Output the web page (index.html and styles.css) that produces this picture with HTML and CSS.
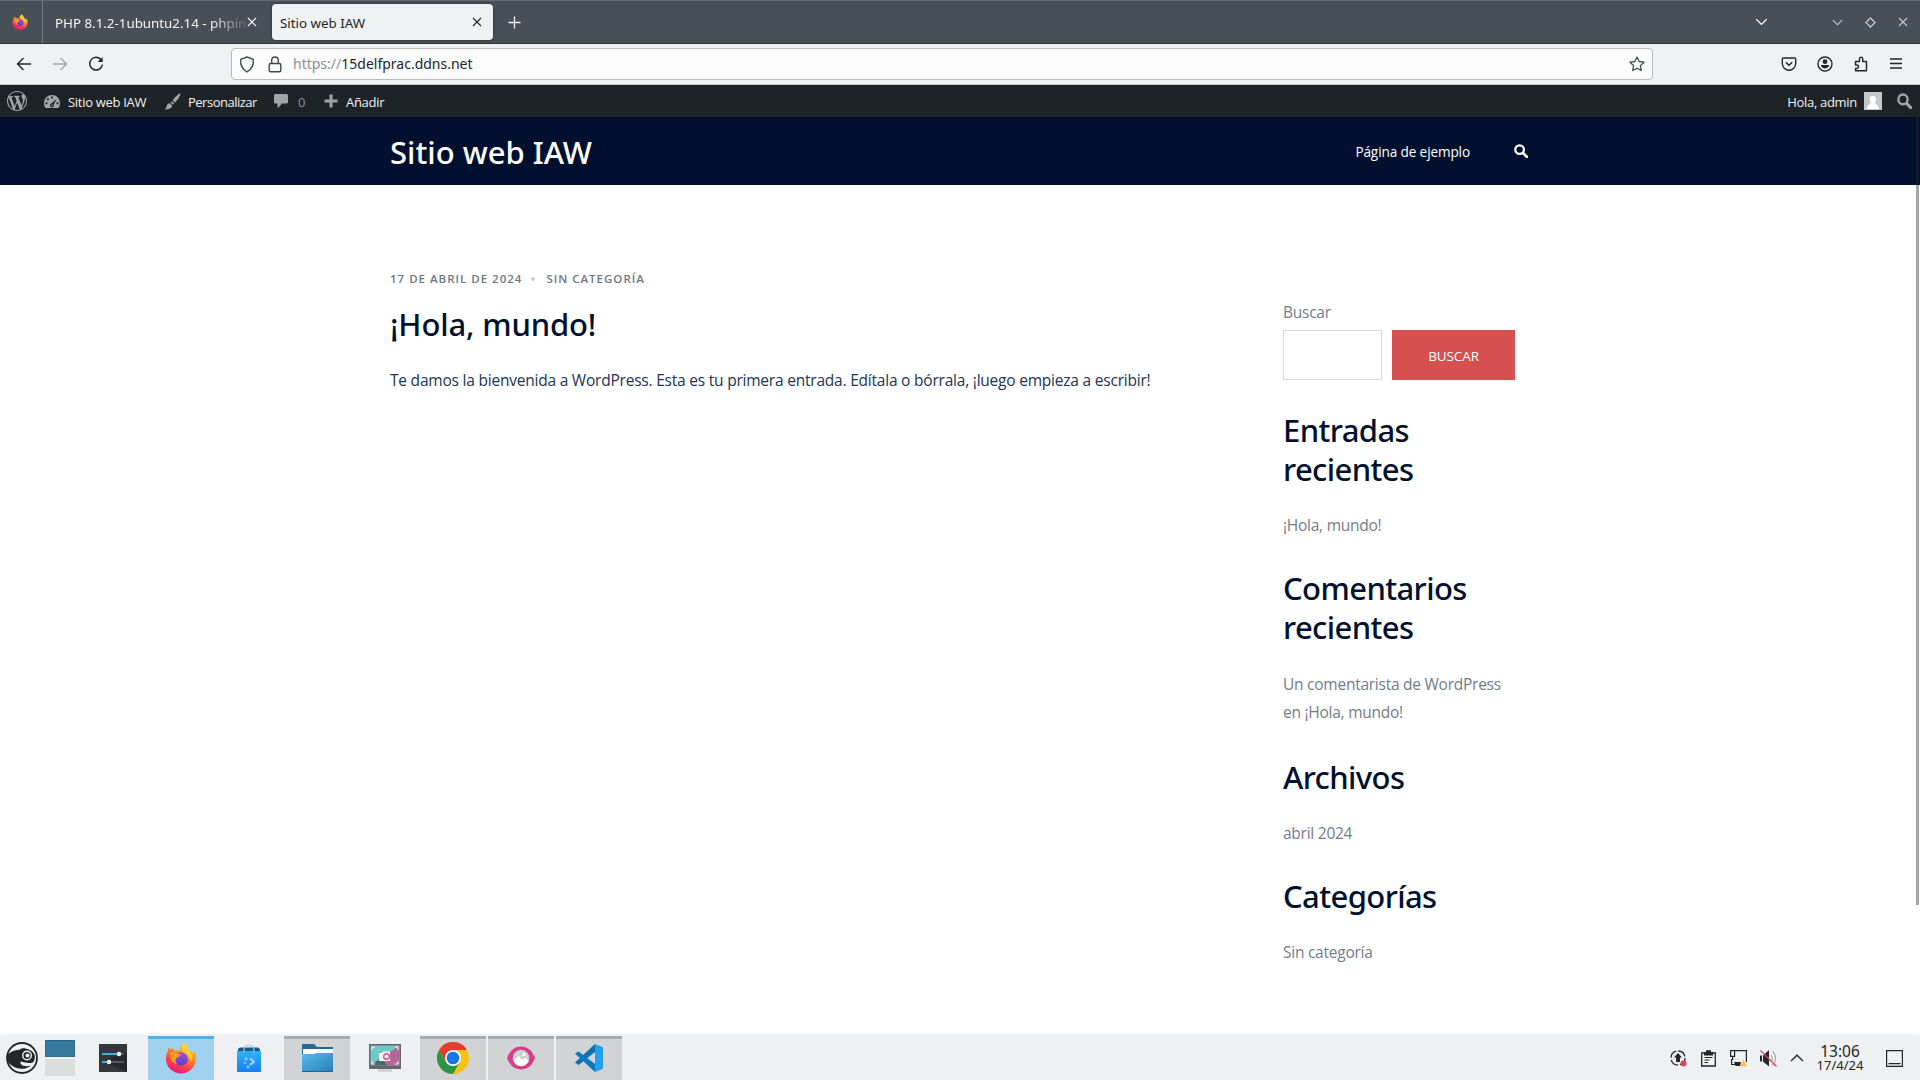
FILE: index.html
```html
<!DOCTYPE html>
<html lang="es">
<head>
<meta charset="utf-8">
<title>Sitio web IAW</title>
<link rel="stylesheet" href="styles.css">
</head>
<body>
<svg class="defs" width="0" height="0">
  <defs>
    <linearGradient id="fire" x1=".8" y1="0" x2=".3" y2="1"><stop offset="0" stop-color="#ffe226"/><stop offset=".4" stop-color="#ff8a1e"/><stop offset=".75" stop-color="#ff3750"/><stop offset="1" stop-color="#e8177c"/></linearGradient>
    <linearGradient id="globe" x1="0" y1="0" x2="0" y2="1"><stop offset="0" stop-color="#a34de0"/><stop offset="1" stop-color="#5b3fc4"/></linearGradient>
    <linearGradient id="bag" x1="0" y1="0" x2="0" y2="1"><stop offset="0" stop-color="#2fb3f5"/><stop offset="1" stop-color="#1a7df5"/></linearGradient>
    <linearGradient id="fold" x1="0" y1="0" x2="1" y2="1"><stop offset="0" stop-color="#57bbea"/><stop offset="1" stop-color="#2980b9"/></linearGradient>
    <symbol id="firefox" viewBox="0 0 32 32">
      <path fill="url(#fire)" d="M19 1c3 2 4 4 4.500 6.500 1.500.3 3.500 2 4.500 4 .8-.7.6-2 .3-3C31 11 31.500 14 31 18c-1 8-7.500 13.500-15 13.500S2 26 1 18.500C.6 15 1.500 11.500 3 9l.5-3.500L6 8c0-1 .4-2 1-2.500L9.500 9c2-.6 3.500-.6 5 0C14.500 5.500 16.500 2.500 19 1z"/>
      <circle cx="16" cy="17" r="6.800" fill="url(#globe)"/>
      <path fill="#ff9a20" d="M5 11c2.500-1.500 6-1.500 8 .5l3 1.500c-.5 1.800-3.500 1.800-5 3.500-1 2-.4 4 1 5.500-4-.5-7-4-7-11z"/>
      <path fill="#ffd83a" d="M19 1c3 2 4 4 4.500 6.500C27 11 28 16 26 20c-1-5-3.500-8-7-9.500-3.500-2-2.500-6.500 0-9.500z" opacity=".8"/>
    </symbol>
    <symbol id="cross" viewBox="0 0 10 10"><path d="M1 1l8 8M9 1L1 9" fill="none" stroke="currentColor" stroke-width="1.100"/></symbol>
    <symbol id="down" viewBox="0 0 12 8"><path d="M.8 1.200L6 6.400l5.200-5.200" fill="none" stroke="currentColor" stroke-width="1.300"/></symbol>
    <symbol id="lens" viewBox="0 0 14 14"><circle cx="5.600" cy="5.600" r="4.300" fill="none" stroke="currentColor" stroke-width="2.200"/><path d="M9 9l3.800 3.800" stroke="currentColor" stroke-width="2.700" stroke-linecap="round"/></symbol>
  </defs>
</svg>

<header class="tabs">
  <div class="pinned"><svg width="16" height="16"><use href="#firefox"/></svg></div>
  <div class="tab"><span class="tab-title fade">PHP 8.1.2-1ubuntu2.14 - phpin</span><svg class="x" width="10" height="10"><use href="#cross"/></svg></div>
  <div class="tab active"><span class="tab-title">Sitio web IAW</span><svg class="x" width="10" height="10"><use href="#cross"/></svg></div>
  <svg class="new-tab" width="13" height="13" viewBox="0 0 13 13"><path d="M6.500.5v12M.5 6.500h12" stroke="#f4f5f6" stroke-width="1.300"/></svg>
  <div class="window-controls">
    <svg class="all-tabs" width="13" height="8"><use href="#down"/></svg>
    <svg width="11" height="7"><use href="#down"/></svg>
    <svg width="11" height="11" viewBox="0 0 11 11"><path d="M5.500 1L10 5.500 5.500 10 1 5.500z" fill="none" stroke="currentColor" stroke-width="1.300"/></svg>
    <svg width="10" height="10"><use href="#cross"/></svg>
  </div>
</header>

<nav class="toolbar">
  <div class="nav-buttons">
    <svg width="16" height="14" viewBox="0 0 16 14"><path d="M7.500 1L1.500 7l6 6M1.500 7H15" fill="none" stroke="#232629" stroke-width="1.400"/></svg>
    <svg width="16" height="14" viewBox="0 0 16 14"><path d="M8.500 1l6 6-6 6M14.500 7H1" fill="none" stroke="#a4a6a9" stroke-width="1.400"/></svg>
    <svg width="16" height="16" viewBox="0 0 16 16"><path d="M13.300 4A6.400 6.400 0 1 0 14.400 8.500" fill="none" stroke="#232629" stroke-width="1.500"/><path d="M14.700 1v5h-5z" fill="#232629"/></svg>
  </div>
  <div class="url">
    <svg width="16" height="17" viewBox="0 0 16 17"><path d="M8 1l6.300 2.300C14.800 9 12.500 13.500 8 16 3.500 13.500 1.200 9 1.700 3.300z" fill="none" stroke="#45494d" stroke-width="1.400" stroke-linejoin="round"/></svg>
    <svg width="14" height="17" viewBox="0 0 14 17"><rect x="1.200" y="7.500" width="11.600" height="8.300" rx="1.500" fill="none" stroke="#45494d" stroke-width="1.400"/><path d="M3.700 7.500V4.300a3.300 3.300 0 0 1 6.600 0v3.200" fill="none" stroke="#45494d" stroke-width="1.400"/></svg>
    <span class="address"><span class="scheme">https://</span>15delfprac.ddns.net</span>
    <svg width="16" height="16" viewBox="0 0 16 16"><path d="M8 1l2.100 4.500 4.900.7-3.600 3.400.9 4.900L8 12.200l-4.300 2.300.9-4.900L1 6.200l4.900-.7z" fill="none" stroke="#45494d" stroke-width="1.300" stroke-linejoin="round"/></svg>
  </div>
  <div class="tools">
    <svg width="16" height="16" viewBox="0 0 16 16"><path d="M2.500 2h11a1.200 1.200 0 0 1 1.200 1.200V7.500a6.700 6.700 0 0 1-13.400 0V3.200A1.200 1.200 0 0 1 2.500 2zM4.800 6.200L8 9.300l3.200-3.100" fill="none" stroke="currentColor" stroke-width="1.400"/></svg>
    <svg width="16" height="16" viewBox="0 0 16 16"><circle cx="8" cy="8" r="7" fill="none" stroke="currentColor" stroke-width="1.400"/><circle cx="8" cy="5.700" r="2.400" fill="currentColor"/><path d="M3.800 9h8.400c-.3 2.200-2 3.500-4.200 3.500S4.100 11.200 3.800 9z" fill="currentColor"/></svg>
    <svg width="16" height="16" viewBox="0 0 16 16"><path d="M2.500 9V5.500h4V2.700a1.600 1.600 0 0 1 3.200 0v2.800h3.800v9.300h-11v-2.300h1.300a1.700 1.700 0 0 0 0-3.500z" fill="none" stroke="currentColor" stroke-width="1.400" stroke-linejoin="round"/></svg>
    <svg width="14" height="16" viewBox="0 0 14 16"><path d="M1 3h12M1 7.500h12M1 12h12" stroke="currentColor" stroke-width="1.300"/></svg>
  </div>
</nav>

<div class="adminbar">
  <svg class="wp" width="20" height="20" viewBox="0 0 20 20"><path fill="currentColor" d="M20 10c0-5.510-4.490-10-10-10C4.480 0 0 4.490 0 10c0 5.520 4.480 10 10 10 5.510 0 10-4.480 10-10zM7.780 15.370L4.370 6.220c.55-.02 1.170-.08 1.170-.08.5-.06.44-1.130-.06-1.110 0 0-1.450.11-2.370.11-.18 0-.37 0-.58-.01C4.120 2.690 6.870 1.110 10 1.110c2.330 0 4.450.87 6.050 2.340-.68-.11-1.650.39-1.650 1.580 0 .74.45 1.360.9 2.100.35.610.55 1.360.55 2.460 0 1.490-1.400 5-1.400 5l-3.030-8.370c.54-.02.82-.17.82-.17.5-.05.44-1.250-.06-1.220 0 0-1.440.12-2.380.12-.87 0-2.330-.12-2.330-.12-.5-.03-.56 1.200-.06 1.220l.92.08 1.260 3.410zM17.410 10c.24-.64.740-1.870.43-4.250.7 1.290 1.050 2.710 1.050 4.250 0 3.290-1.730 6.240-4.400 7.780.97-2.590 1.940-5.200 2.920-7.780zM6.100 18.090C3.120 16.650 1.110 13.530 1.110 10c0-1.300.23-2.480.72-3.590C3.250 10.300 4.670 14.200 6.100 18.090zm4.030-6.630l2.580 6.980c-.86.29-1.760.45-2.710.45-.79 0-1.570-.11-2.290-.33.81-2.380 1.620-4.740 2.420-7.100z"/></svg>
  <div class="ab-item site">
    <svg width="16" height="15" viewBox="0 0 16 15"><path d="M8 1a8 8 0 0 0-8 8c0 2 .6 3.700 1.500 5h13A8.500 8.500 0 0 0 16 9a8 8 0 0 0-8-8z" fill="currentColor"/><g fill="#1d2327"><circle cx="8" cy="3.600" r="1.100"/><circle cx="3.900" cy="5.300" r="1.100"/><circle cx="2.500" cy="9.300" r="1.100"/><circle cx="13.500" cy="9.300" r="1.100"/><path d="M12.800 4.800L9.700 10.500a2 2 0 1 1-2.400-1z"/></g><circle cx="8" cy="11.200" r=".8" fill="currentColor"/></svg>
    <span>Sitio web IAW</span></div>
  <div class="ab-item customize">
    <svg width="17" height="17" viewBox="0 0 17 17"><path d="M16.300.7c.7.800-.3 3-5.300 9L8.600 7.500C13 2 15.500-.1 16.300.7zM7.800 8.300l2.300 2.300-1.200 1.200-2.300-2.300zM5.800 10.200l2.300 2.400c.2 2.200-3 4.300-7.800 3.800 2-1 1.800-2.200 2.500-4 .6-1.500 1.900-2.200 3-2.200z" fill="currentColor"/></svg>
    <span>Personalizar</span></div>
  <div class="ab-item comments">
    <svg width="14" height="16" viewBox="0 0 14 16"><path d="M1.500 1h11A1.500 1.500 0 0 1 14 2.500V9a1.500 1.500 0 0 1-1.500 1.500H8L3.500 15.500v-5h-2A1.500 1.500 0 0 1 0 9V2.500A1.500 1.500 0 0 1 1.500 1z" fill="currentColor"/></svg>
    <span class="dim">0</span></div>
  <div class="ab-item add">
    <svg width="14" height="14" viewBox="0 0 14 14"><path d="M7 .5v13M.5 7h13" stroke="currentColor" stroke-width="3"/></svg>
    <span>Añadir</span></div>
  <div class="ab-item account"><span>Hola, admin</span>
    <svg width="18" height="18" viewBox="0 0 18 18"><path d="M0 0h18v18H0z" fill="#c5c6c7"/><path d="M9 4a3.200 3.200 0 0 1 3.200 3.400c0 1.500-.6 2.400-1.300 3.200.2 1.700 3.600 2 4.100 6.400H3c.5-4.400 3.900-4.700 4.100-6.400-.7-.8-1.300-1.700-1.300-3.200A3.200 3.200 0 0 1 9 4z" fill="#fff"/></svg>
    <svg class="ab-search" width="15" height="16" viewBox="0 0 14 14" preserveAspectRatio="none"><use href="#lens"/></svg></div>
</div>

<div class="site-header">
  <div class="container">
    <div class="brand">Sitio web IAW</div>
    <div class="menu"><span>Página de ejemplo</span><svg width="14" height="14"><use href="#lens"/></svg></div>
  </div>
</div>

<main class="content container">
  <article>
    <div class="meta"><span>17 de abril de 2024</span><i></i><span>Sin categoría</span></div>
    <h2>¡Hola, mundo!</h2>
    <p>Te damos la bienvenida a WordPress. Esta es tu primera entrada. Edítala o bórrala, ¡luego empieza a escribir!</p>
  </article>
  <aside>
    <label>Buscar</label>
    <div class="search"><div class="field"></div><div class="button">BUSCAR</div></div>
    <h2>Entradas<br>recientes</h2>
    <p>¡Hola, mundo!</p>
    <h2>Comentarios<br>recientes</h2>
    <p class="comment">Un comentarista de WordPress<br>en ¡Hola, mundo!</p>
    <h2>Archivos</h2>
    <p>abril 2024</p>
    <h2>Categorías</h2>
    <p>Sin categoría</p>
  </aside>
</main>
<div class="scrollbar"></div>

<footer class="taskbar">
  <svg class="start" width="32" height="32" viewBox="0 0 32 32"><circle cx="16" cy="16" r="15" fill="#eff0f1" stroke="#232629" stroke-width="1.800"/><path d="M1.500 13C4 9.500 9 8 13 8c2-1.500 4-2 6.500-1.500 4 .5 7.500 2.500 9 6 .7 3 .3 6-1.500 8-4 1-8 .5-12-1-1.500 1 0 3.500 2.500 4.300 2.500.7 5 .5 7.500-.3-3 2.700-6.500 3.500-10 3.300C10 26.500 6 24.500 1.800 20z" fill="#232629"/><circle cx="21" cy="13.500" r="4.300" fill="#232629" stroke="#eff0f1" stroke-width="1.400"/><circle cx="21.500" cy="13.500" r="2" fill="#eff0f1"/></svg>
  <div class="pager"><b></b><b></b></div>
  <div class="task"><svg width="28" height="28" viewBox="0 0 28 28"><path d="M0 0h28v28H0z" fill="#34373b"/><path d="M4 18l24 10V8L20 10z" fill="#26292c"/><path d="M3 10h22M3 18h22" stroke="#54585c" stroke-width="2"/><path d="M3 10h17M3 18h7" stroke="#3daee9" stroke-width="2"/><circle cx="20" cy="10" r="2.200" fill="#fff"/><circle cx="10" cy="18" r="2.200" fill="#fff"/></svg></div>
  <div class="task focused"><svg width="32" height="32"><use href="#firefox"/></svg></div>
  <div class="task"><svg width="24" height="28" viewBox="0 0 24 28"><path d="M1 5l2-1.500h18L23 5v4H1z" fill="#22587c"/><path d="M0 7h24v21H0z" fill="url(#bag)"/><path d="M7 9V6a5 5 0 0 1 10 0v3" fill="none" stroke="#7fcbf5" stroke-width="1.200"/><path d="M13 14.500l4 3.200-4 3.300" fill="none" stroke="#a9d9ff" stroke-width="1.800"/><circle cx="9" cy="15" r="1.400" fill="#8dd0ff"/><circle cx="8" cy="19" r="1" fill="#8dd0ff"/><circle cx="11" cy="23" r="1.400" fill="#8dd0ff"/></svg></div>
  <div class="task open"><svg width="31" height="28" viewBox="0 0 31 28"><path d="M0 0h12l3 3h16v12H0z" fill="#28688f"/><path d="M1 5h30v8H1z" fill="#fff"/><path d="M0 10h12l2-1h17v19H0z" fill="url(#fold)"/><path d="M0 27h31v1H0z" fill="#216695"/></svg></div>
  <div class="task"><svg width="32" height="28" viewBox="0 0 32 28"><path d="M0 0h32v25H0z" fill="#656769"/><path d="M1.500 1.500h29v20h-29z" fill="#6fc9c8"/><path d="M30.500 1.500v20H17l-5-7z" fill="#b0689b"/><path d="M1.500 21.500L12 14l6 7.500z" fill="#4e6a68"/><path d="M3 6V3h3M26 3h3v3M29 17v3h-3M6 20H3v-3" fill="none" stroke="#fff"/><path d="M10 9h3l1-1.500h7V17H10z" fill="#f3f0f2"/><circle cx="17.500" cy="12.500" r="2.800" fill="none" stroke="#d4568b" stroke-width="1.400"/><path d="M9 26.500h14" stroke="#c5c7c9" stroke-width="2"/></svg></div>
  <div class="task open"><svg width="32" height="32" viewBox="0 0 32 32"><circle cx="16" cy="16" r="16" fill="#fbc116"/><path d="M16 8h13.860A16 16 0 0 0 2.140 8l6.930 12z" fill="#e33b2e"/><path d="M2.140 8a16 16 0 0 0 13.860 24l6.930-12L16 24l-6.930-4z" fill="#2a9547"/><circle cx="16" cy="16" r="8" fill="#fff"/><circle cx="16" cy="16" r="6.300" fill="#1a73e8"/></svg></div>
  <div class="task open"><svg width="28" height="24" viewBox="0 0 28 24"><path d="M0 12C3 4 8 .5 14 .5S25 4 28 12c-3 8-8 11.500-14 11.500S3 20 0 12z" fill="#d83d8b"/><circle cx="14" cy="12" r="8.300" fill="#cfd0d2"/><path d="M6.500 15l5-5 4 4 3-2 3.300 3a8.300 8.300 0 0 1-15.300 0z" fill="#fff"/><circle cx="17" cy="8.500" r="1.500" fill="#fff"/></svg></div>
  <div class="task open"><svg width="28" height="28" viewBox="0 0 28 28"><path d="M20 0v8L3.500 21 0 18.500 20 0z" fill="#0b70b5"/><path d="M20 28v-8L3.500 7.500 0 9.500 20 28z" fill="#0879c0"/><path d="M20 0l8 3.300v21.400L20 28z" fill="#24a0ee"/></svg></div>
  <div class="tray">
    <svg width="17" height="17" viewBox="0 0 17 17"><circle cx="8" cy="8" r="7" fill="none" stroke="#232629" stroke-width="1.300" stroke-dasharray="9 2"/><path d="M8 3l4 4.500H10V12H6V7.500H4z" fill="#232629"/><circle cx="13.500" cy="13.500" r="3" fill="#da4453"/></svg>
    <svg width="17" height="17" viewBox="-1 0 17 17"><path d="M.7 3h13.600v13H.7z" fill="none" stroke="#232629" stroke-width="1.300"/><path d="M3 2h2V.3h5V2h2v3.500H3z" fill="#232629"/><path d="M3.500 7.500h8M3.500 10h5M3.500 12.500h3.500" stroke="#232629"/></svg>
    <svg width="17" height="17" viewBox="0 0 17 17"><path d="M.6.6h4v5.800h-4zM4.600.6h11.800V12M2.600 6.500v3h-1v5H5" fill="none" stroke="#232629" stroke-width="1.200"/><path d="M4 12h7l-1 4H5.500z" fill="#232629"/><path d="M13.500 10l3.500 6.500h-7z" fill="#fdbc4b"/></svg>
    <svg width="17" height="17" viewBox="0 0 17 17"><path d="M0 5.500h2v6H0zM3 5.500L9 0v16.500L3 11.500z" fill="#232629"/><path d="M11 5c1.500 2 1.500 5 0 7M12.500 1.500c4 3.500 4 10 0 14" fill="none" stroke="#a8aaac" stroke-width="1.200"/><path d="M.5.5l16 16" stroke="#da4453" stroke-width="1.300"/></svg>
    <svg class="caret" width="14" height="8" viewBox="0 0 14 8"><path d="M1 7l6-5.800L13 7" fill="none" stroke="#232629" stroke-width="1.300"/></svg>
    <div class="clock"><span>13:06</span><small>17/4/24</small></div>
    <svg width="17" height="17" viewBox="0 0 17 17"><path d="M.6.6h15.800v15.800H.6zM2.500 13.600h12" fill="none" stroke="#232629" stroke-width="1.200"/></svg>
  </div>
</footer>
</body>
</html>
```
FILE: styles.css
```css
* { box-sizing: border-box; }
body {
  margin: 0; width: 1920px; height: 1080px; overflow: hidden;
  display: flex; flex-direction: column; position: relative;
  background: #fff; color: #232629;
  font-family: "Noto Sans", sans-serif; font-size: 13.33px;
}
svg { display: block; flex: none; }
.defs { position: absolute; }
h2, p { margin: 0; }

/* Browser tabs */
.tabs {
  height: 44px; flex: none; display: flex; align-items: stretch;
  background: #475057; border-top: 1px solid #5d6d7c; border-bottom: 1px solid #31363b; color: #f4f5f6;
}
.pinned { width: 43px; border-right: 1px solid #727a80; padding: 13px 0 0 12px; }
.tab { display: flex; align-items: center; width: 229px; padding: 2px 15px 0 12px; height: 42px; }
.tab .x { margin: 0 0 3px auto; }
.tab-title { white-space: nowrap; }
.fade { width: 192px; mask-image: linear-gradient(to right, #000 155px, transparent 195px); }
.tab.active { width: 221px; height: 36px; margin-top: 3px; border-radius: 4px; background: #f0f1f3; color: #232629; padding: 1px 11px 0 8px; box-shadow: 0 0 3px rgba(0,0,0,.45); }
.tab.active .x { margin-bottom: 1px; }
.new-tab { margin: 15px 0 0 15px; }
.window-controls { display: flex; align-items: center; margin-left: auto; height: 42px; padding-right: 12px; gap: 22px; color: #c4c8cb; }
.all-tabs { margin-right: 42px; color: #fff; }

/* Browser toolbar */
.toolbar { height: 41px; flex: none; display: flex; align-items: center; background: #f0f1f3; border-bottom: 1px solid #c3c5c7; padding: 0 17px 0 16px; }
.nav-buttons { display: flex; align-items: center; gap: 20px; width: 215px; }
.url { width: 1422px; height: 32px; display: flex; align-items: center; border: 1px solid #b8babc; border-radius: 4px; background: #fcfcfc; padding: 0 7px; }
.url svg + svg { margin-left: 13px; }
.address { flex: 1; margin: 0 0 2px 11px; font-size: 14px; }
.scheme { color: #8d8f91; }
.tools { display: flex; gap: 20px; margin-left: auto; align-items: center; }

/* WordPress admin bar */
.adminbar { height: 32px; flex: none; display: flex; align-items: center; background: #1d2327; color: #a0a5aa; padding: 0 8px 0 7px; font-family: "Open Sans", sans-serif; font-size: 13px; letter-spacing: -.3px; }
.ab-item { display: flex; align-items: center; }
.ab-item span { color: #f0f0f1; padding-top: 1px; }
.ab-item .dim { color: #8a8f94; }
.site { margin-left: 17px; width: 120px; gap: 8px; }
.customize { width: 110px; gap: 7px; letter-spacing: -.5px; }
.comments { width: 50px; gap: 10px; }
.add { gap: 8px; }
.account { margin-left: auto; gap: 7px; }
.ab-search { margin-left: 8px; }

/* Site header */
.site-header { height: 68px; flex: none; background: #00102e; color: #fff; font-family: "Open Sans", sans-serif; }
.container { width: 1140px; margin: 0 auto; }
.site-header .container { display: flex; align-items: center; justify-content: space-between; height: 68px; padding-right: 2px; }
.brand { font-family: "Noto Sans", sans-serif; font-size: 31px; font-weight: 540; letter-spacing: 0; padding-top: 1px; }
.menu { display: flex; align-items: center; gap: 44px; font-size: 13.6px; letter-spacing: -.12px; }
.menu span { padding-top: 1px; }

/* Page */
.content { flex: 1; display: flex; justify-content: space-between; font-family: "Open Sans", sans-serif; }
article { padding-top: 83px; }
.meta { display: flex; align-items: center; height: 20px; color: #6d7685; font-size: 11.5px; font-weight: 600; text-transform: uppercase; letter-spacing: 1px; }
.meta i { width: 4px; height: 4px; border-radius: 50%; background: #ccced6; margin: 1px 11px 0 9px; }
h2 { color: #00102e; font-family: "Noto Sans", sans-serif; font-size: 31px; line-height: 39px; font-weight: 500; letter-spacing: -.6px; }
article h2 { margin-top: 17px; letter-spacing: -.15px; }
article p { margin-top: 22px; color: #233452; font-size: 15.5px; line-height: 28px; letter-spacing: -.215px; white-space: nowrap; }
aside { width: 247px; padding-top: 113px; color: #737c8c; font-size: 15.5px; line-height: 28px; letter-spacing: -.25px; }
aside label { display: block; }
.search { display: flex; gap: 10px; margin: 4px 0 31px; }
.field { width: 99px; height: 50px; border: 1px solid #d9d9d9; }
.button { width: 123px; height: 50px; background: #d65050; color: #fff; text-align: center; line-height: 52px; font-size: 13.5px; letter-spacing: -.1px; }
aside p { margin: 22px 0 30px; }
aside .comment { margin: 23px 0 32px; }

.scrollbar { position: absolute; left: 1916px; top: 117px; width: 3px; height: 788px; background: rgba(40,40,40,.42); }

/* Desktop panel */
.taskbar { height: 45px; flex: none; display: flex; background: #eff0f1; padding: 1px 17px 0 6px; box-shadow: 0 0 4px rgba(0,0,0,.13); }
.start { margin-top: 6px; }
.pager { width: 30px; margin: 4px 13px 0 7px; display: flex; flex-direction: column; gap: 2px; }
.pager b { height: 17px; background: #dcdddd; }
.pager b:first-child { background: #377a9d; border: 1px solid #2b6c90; }
.task { width: 66px; margin-right: 2px; padding-bottom: 4px; border-top: 3px solid transparent; display: flex; align-items: center; justify-content: center; }
.pager + .task { width: 50px; margin-right: 10px; }
.task.focused { background: #a0d2ef; border-top-color: #4fb2e8; }
.task.open { background: #d2d3d4; border-top-color: #a7a9aa; }
.tray { display: flex; align-items: center; margin-left: auto; gap: 13px; }
.clock { display: flex; flex-direction: column; align-items: center; width: 50px; margin: 0 8px 0 -2px; font-size: 15.5px; line-height: 15px; }
.clock small { font-size: 13px; line-height: 13px; }
```
